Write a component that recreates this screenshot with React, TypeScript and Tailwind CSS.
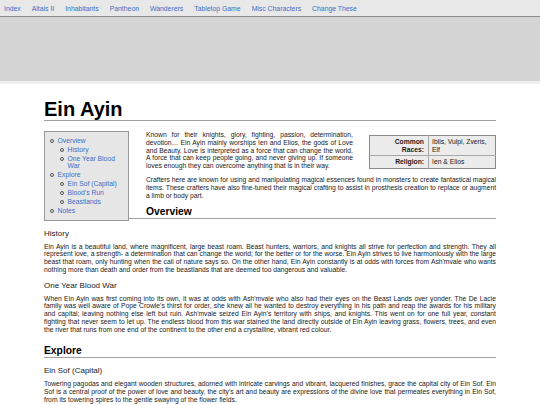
import React from "react";

const nav = ["Index", "Altais II", "Inhabitants", "Pantheon", "Wanderers", "Tabletop Game", "Misc Characters", "Change These"];

function Item({ children, sub, last }: { children: React.ReactNode; sub?: React.ReactNode; last?: boolean }) {
  return (
    <li className={last ? "" : "mb-[1.3px]"}>
      <div className="flex items-start">
        <span className="mt-[2.2px] mr-[4px] shrink-0 w-[3.6px] h-[3.6px] rounded-full border-[0.8px] border-[#555]" />
        <a className="text-[#3a6fc6]">{children}</a>
      </div>
      {sub}
    </li>
  );
}

export default function App() {
  return (
    <div className="min-h-[405px] bg-white text-[#1a1a1a] font-['Liberation_Sans',Arial,sans-serif]">
      <nav className="h-[17px] bg-[#e8e8e8] border-b border-[#8c8c8c] flex items-center pl-[4px] gap-[11px] text-[6.85px] pt-[2px]">
        {nav.map((n) => (
          <a key={n} className="text-[#3a6fc6]">{n}</a>
        ))}
      </nav>
      <div className="h-[64px] bg-[#d4d4d4]" />
      <div className="h-[3px] bg-[#efefef]" />
      <main className="mx-[44px] text-[6.75px] leading-[7.8px]">
        <h1 className="mt-[14.6px] text-[20px] leading-[21px] font-bold text-black border-b border-[#a0a0a0]">Ein Ayin</h1>
        <div className="mt-[10.4px]">
          <div className="float-left w-[85px] mr-[17px] bg-[#e6e6e6] border border-[#9a9a9a] pt-[5px] pb-[6px] pl-[5px] pr-[4px] leading-[7.6px]">
            <ul>
              <Item
                sub={
                  <ul className="pl-[10px] mt-[1.3px]">
                    <Item>History</Item>
                    <Item last>One Year Blood War</Item>
                  </ul>
                }
              >
                Overview
              </Item>
              <Item
                sub={
                  <ul className="pl-[10px] mt-[1.3px]">
                    <Item>Ein Sof (Capital)</Item>
                    <Item>Blood's Run</Item>
                    <Item last>Beastlands</Item>
                  </ul>
                }
              >
                Explore
              </Item>
              <Item last>Notes</Item>
            </ul>
          </div>
          <table className="float-right w-[127px] mt-[4px] ml-[16px] bg-[#ececec] border border-[#8a8a8a] border-collapse leading-[7.6px]">
            <tbody>
              <tr className="border-b border-[#a8a8a8]">
                <th className="w-[59px] text-right font-bold pl-[6px] pr-[4px] pt-[2px] pb-[2px] align-top border-r border-[#a8a8a8]">Common Races:</th>
                <td className="px-[3px] pt-[2px] pb-[2px] align-top">Iblis, Vulpi, Zveris, Elf</td>
              </tr>
              <tr>
                <th className="text-right font-bold pl-[6px] pr-[4px] py-[2px] border-r border-[#a8a8a8]">Religion:</th>
                <td className="px-[3px] py-[2px]">Ien &amp; Elios</td>
              </tr>
            </tbody>
          </table>
          <p className="text-justify mb-[6px]">
            Known for their knights, glory, fighting, passion, determination, devotion… Ein Ayin mainly worships Ien and Elios, the gods of Love and Beauty. Love is interpreted as a force that can change the world. A force that can keep people going, and never giving up. If someone loves enough they can overcome anything that is in their way.
          </p>
          <p className="text-justify mb-[7px] tracking-[-0.02px]">
            Crafters here are known for using and manipulating magical essences found in monsters to create fantastical magical items. These crafters have also fine-tuned their magical crafting to assist in prosthesis creation to replace or augment a limb or body part.
          </p>
          <h2 className="text-[10.3px] leading-[12px] font-bold text-black border-b border-[#a0a0a0] mb-[9.4px]">Overview</h2>
          <h3 className="text-[8px] leading-[9.5px] mb-[4.3px]">History</h3>
          <p className="text-justify mb-[7px]">
            Ein Ayin is a beautiful land, where magnificent, large beast roam. Beast hunters, warriors, and knights all strive for perfection and strength. They all represent love, a strength- a determination that can change the world; for the better or for the worse. Ein Ayin strives to live harmoniously with the large beast that roam, only hunting when the call of nature says so. On the other hand, Ein Ayin constantly is at odds with forces from Ash'mvale who wants nothing more than death and order from the beastlands that are deemed too dangerous and valuable.
          </p>
          <h3 className="text-[8px] leading-[9.5px] mb-[4.3px]">One Year Blood War</h3>
          <p className="text-justify mb-[11px] tracking-[0.01px]">
            When Ein Ayin was first coming into its own, it was at odds with Ash'mvale who also had their eyes on the Beast Lands over yonder. The De Lacie family was well aware of Pope Crowle's thirst for order, she knew all he wanted to destroy everything in his path and reap the awards for his military and capital; leaving nothing else left but ruin. Ash'mvale seized Ein Ayin's territory with ships, and knights. This went on for one full year, constant fighting that never seem to let up. The endless blood from this war stained the land directly outside of Ein Ayin leaving grass, flowers, trees, and even the river that runs from one end of the continent to the other end a crystalline, vibrant red colour.
          </p>
          <h2 className="text-[10.3px] leading-[12px] font-bold text-black border-b border-[#a0a0a0] mb-[8.4px]">Explore</h2>
          <h3 className="text-[8px] leading-[9.5px] mb-[5px]">Ein Sof (Capital)</h3>
          <p className="text-justify mb-[7px]">
            Towering pagodas and elegant wooden structures, adorned with intricate carvings and vibrant, lacquered finishes, grace the capital city of Ein Sof. Ein Sof is a central proof of the power of love and beauty, the city's art and beauty are expressions of the divine love that permeates everything in Ein Sof, from its towering spires to the gentle swaying of the flower fields.
          </p>
        </div>
      </main>
    </div>
  );
}
